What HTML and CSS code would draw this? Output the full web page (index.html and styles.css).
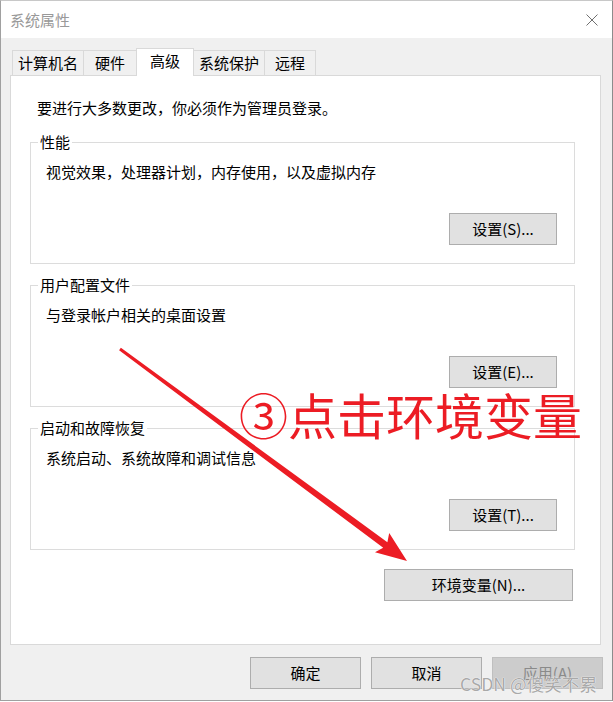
FILE: index.html
```html
<!DOCTYPE html>
<html lang="zh-CN">

<head>
    <meta charset="UTF-8">
    <meta name="viewport" content="width=device-width, initial-scale=1.0">
    <title>系统属性</title>
    <link rel="stylesheet" href="styles.css">
</head>

<body>
    <div class="window">
        <div class="titlebar">
            <span class="title">系统属性</span>
            <svg class="close" width="12" height="12" viewBox="0 0 12 12">
                <path d="M0.5 0.5 L11.5 11.5 M11.5 0.5 L0.5 11.5" />
            </svg>
        </div>

        <div class="client">
            <div class="tabs">
                <div class="tab tab-name">计算机名</div>
                <div class="tab tab-hw">硬件</div>
                <div class="tab tab-adv active">高级</div>
                <div class="tab tab-protect">系统保护</div>
                <div class="tab tab-remote">远程</div>
            </div>

            <div class="panel">
                <p class="intro">要进行大多数更改，你必须作为管理员登录。</p>

                <fieldset class="group">
                    <legend>性能</legend>
                    <p class="desc">视觉效果，处理器计划，内存使用，以及虚拟内存</p>
                    <div class="group-actions">
                        <button class="btn">设置(S)...</button>
                    </div>
                </fieldset>

                <fieldset class="group">
                    <legend>用户配置文件</legend>
                    <p class="desc">与登录帐户相关的桌面设置</p>
                    <div class="group-actions">
                        <button class="btn">设置(E)...</button>
                    </div>
                </fieldset>

                <fieldset class="group">
                    <legend>启动和故障恢复</legend>
                    <p class="desc">系统启动、系统故障和调试信息</p>
                    <div class="group-actions">
                        <button class="btn">设置(T)...</button>
                    </div>
                </fieldset>

                <div class="env-row">
                    <button class="btn btn-env">环境变量(N)...</button>
                </div>
            </div>

            <div class="footer">
                <button class="btn btn-dialog">确定</button>
                <button class="btn btn-dialog">取消</button>
                <button class="btn btn-dialog" disabled>应用(A)</button>
            </div>
        </div>

        <!-- annotation drawn on top of the screenshot -->
        <div class="annotation">③点击环境变量</div>
        <svg class="arrow" width="613" height="702" viewBox="0 0 613 702">
            <polygon points="120.9,347.8 387.4,542.2 389.2,533 407,561 375,552.2 383.2,547.8 119.1,350.2" />
        </svg>
        <div class="watermark">CSDN @傻笑不累</div>
    </div>
</body>

</html>
```

FILE: styles.css
```css
* {
    box-sizing: border-box;
}

body {
    margin: 0;
    background: #fff;
    font-family: "Microsoft YaHei", "Noto Sans CJK SC", sans-serif;
    font-size: 15px;
    line-height: 20px;
    color: #000;
}

p {
    margin: 0;
}

.window {
    position: relative;
    width: 613px;
    height: 701px;
    background: #f0f0f0;
    border-left: 1px solid #a0a0a0;
    border-right: 1px solid #8c8c8c;
    border-bottom: 1px solid #a0a0a0;
    border-top: 1px solid #c8c8c8;
}

.titlebar {
    height: 37px;
    background: #fff;
    display: flex;
    align-items: center;
    justify-content: space-between;
    padding: 0 14px 0 9px;
}

.title {
    color: #999;
}

.close path {
    stroke: #707070;
    stroke-width: 1;
    fill: none;
}

.client {
    padding: 10px 11px 0 9px;
}

/* tabs */
.tabs {
    display: flex;
    align-items: flex-end;
    margin-left: 2px;
}

.tab {
    height: 25px;
    border: 1px solid #d9d9d9;
    border-bottom: none;
    background: #f0f0f0;
    text-align: center;
    line-height: 23px;
    margin-left: -1px;
}

.tab:first-child {
    margin-left: 0;
}

.tab.active {
    position: relative;
    z-index: 1;
    height: 28px;
    margin-bottom: -1px;
    background: #fff;
    line-height: 24px;
}

.tab-name { width: 72px; }
.tab-hw { width: 54px; }
.tab-adv { width: 58px; }
.tab-protect { width: 72px; }
.tab-remote { width: 52px; }

/* main panel */
.panel {
    height: 570px;
    background: #fff;
    border: 1px solid #d9d9d9;
    padding: 0 25px 0 19px;
}

.intro {
    margin: 22px 0 14px 7px;
}

.group {
    width: 545px;
    margin: 0 0 11px;
    padding: 0 17px 18px 15px;
    border: 1px solid #dcdcdc;
    min-width: 0;
}

.group legend {
    margin-left: -8px;
    padding: 0 2px;
    line-height: 20px;
}

.desc {
    margin-top: 10px;
}

.group-actions {
    display: flex;
    justify-content: flex-end;
    margin-top: 31px;
}

.btn {
    height: 32px;
    padding: 0;
    border: 1px solid #adadad;
    background: #e1e1e1;
    font: inherit;
    color: #000;
}

.group .btn {
    width: 108px;
}

.env-row {
    width: 545px;
    display: flex;
    justify-content: flex-end;
    padding-right: 2px;
    margin-top: 19px;
}

.btn-env {
    width: 189px;
}

/* dialog buttons */
.footer {
    display: flex;
    justify-content: flex-end;
    gap: 10px;
    margin: 12px -2px 0 0;
}

.btn-dialog {
    width: 111px;
}

.btn-dialog:disabled {
    background: #cccccc;
    border-color: #bfbfbf;
    color: #8a8a8a;
}

/* overlays */
.annotation {
    position: absolute;
    left: 238px;
    top: 388px;
    font-size: 49px;
    line-height: 49px;
    color: #ec1c24;
    white-space: nowrap;
}

.arrow {
    position: absolute;
    left: -1px;
    top: -1px;
    pointer-events: none;
}

.arrow polygon {
    fill: #ec1c24;
}

.watermark {
    position: absolute;
    left: 459px;
    top: 673px;
    font-size: 17.6px;
    line-height: 20px;
    color: #a9a9a9;
    text-shadow: 0 0 1px #fff, 0 0 1px #fff;
    white-space: nowrap;
}
```
